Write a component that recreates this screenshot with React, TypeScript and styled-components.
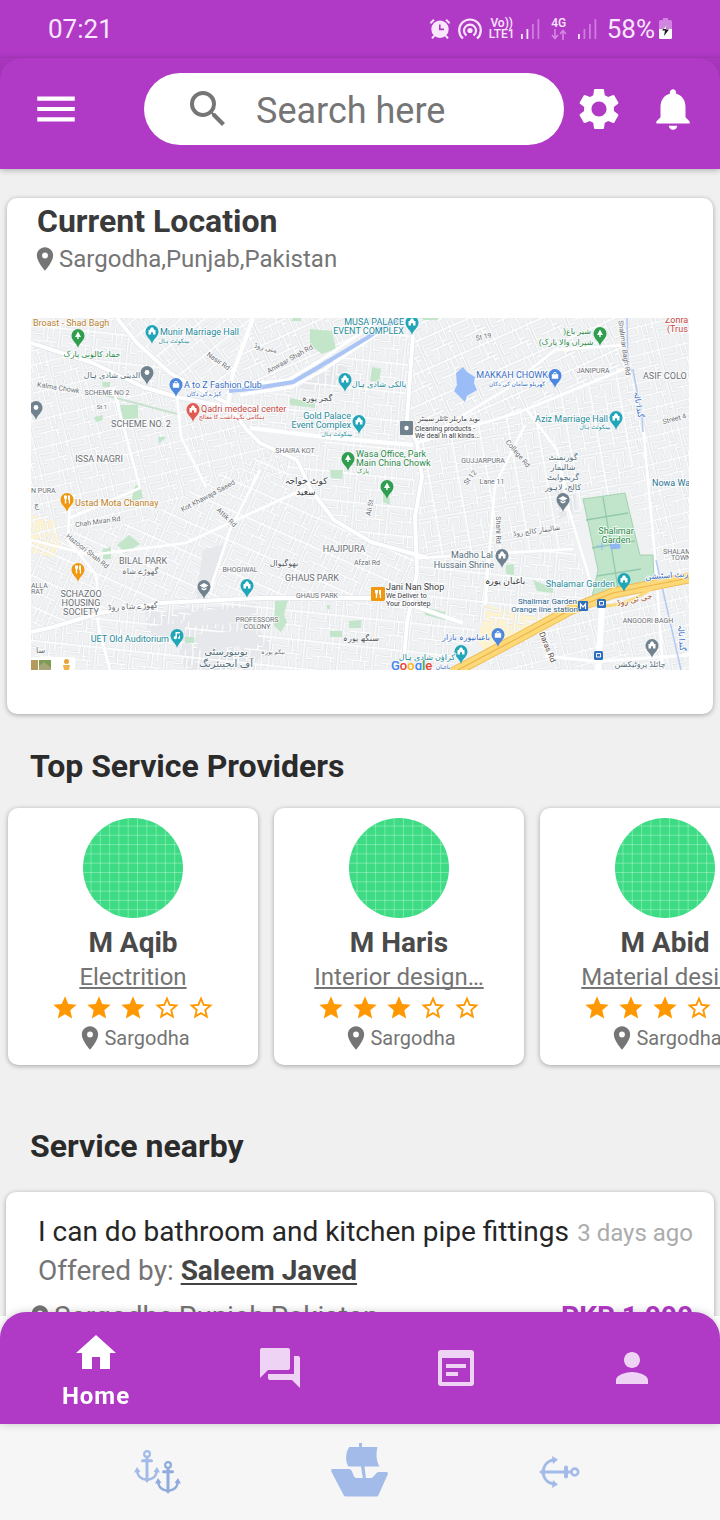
import React from "react";
import styled, { createGlobalStyle } from "styled-components";
import {
  MdForum,
  MdHome,
  MdLocationOn,
  MdMenu,
  MdNotifications,
  MdPerson,
  MdSearch,
  MdSettings,
  MdStar,
  MdStarBorder,
} from "react-icons/md";

const purple = "#b039c6";

const GlobalStyle = createGlobalStyle`
  * { box-sizing: border-box; }
  body { margin: 0; background: #fff; font-family: Roboto, "Noto Sans", sans-serif; }
  button, input { font: inherit; border: 0; background: none; padding: 0; color: inherit; }
  h1, h2, h3, p { margin: 0; }
  svg { display: block; flex: none; }
`;

const Shell = styled.div`
  display: flex;
  flex-direction: column;
  height: 100vh;
  overflow: hidden;
`;

/* ---------- status bar ---------- */

const StatusBar = styled.div`
  display: flex;
  align-items: center;
  flex: none;
  height: 58px;
  padding: 0 48px;
  background: ${purple};
  color: #fae6fd;
  font-size: 26px;
  line-height: 32px;
`;

const StatusIcons = styled.div`
  display: flex;
  align-items: center;
  gap: 6px;
  margin-left: auto;
`;

const Carrier = styled.div`
  display: flex;
  flex-direction: column;
  align-items: center;
  width: 26px;
  font-size: 12px;
  font-weight: 500;
  line-height: 11px;
  white-space: nowrap;
`;

const Battery = styled.div`
  display: flex;
  align-items: center;
  gap: 4px;
  margin-left: 4px;
`;

const Bars = ({ lit }: { lit: number }) => (
  <svg width="19" height="21" viewBox="0 0 19 21" fill="currentColor">
    {[5, 10, 15, 20].map((h, i) => (
      <rect key={h} x={i * 5.5} y={20 - h} width="1.8" height={h} opacity={i < lit ? 1 : 0.4} />
    ))}
  </svg>
);

const AlarmIcon = () => (
  <svg width="22" height="22" viewBox="0 0 22 22" fill="currentColor">
    <path
      fillRule="evenodd"
      d="M11 2.500a8.700 8.700 0 1 1 0 17.400 8.700 8.700 0 0 1 0-17.400zm-1 4v5.700h5v-1.700h-3.400v-4z"
    />
    <path
      d="M1.400 5.200 5 1.600M20.600 5.200 17 1.600M5.600 17.400 3 20.400M16.400 17.400l2.600 3"
      stroke="currentColor"
      strokeWidth="2"
    />
  </svg>
);

const HotspotIcon = () => (
  <svg width="26" height="22" viewBox="0 0 26 22" fill="none" stroke="currentColor" strokeWidth="2.2">
    <circle cx="13" cy="12.500" r="2.600" fill="currentColor" stroke="none" />
    <path d="M9.500 17.500a6 6 0 1 1 7 0M6 20.500a10.800 10.800 0 1 1 14 0" />
  </svg>
);

const DataArrows = () => (
  <svg width="16" height="11" viewBox="0 0 16 11" fill="none" stroke="currentColor" strokeWidth="1.7" opacity="0.45">
    <path d="M4 0v9M1 6l3 3.500 3-3.500M12 11V2M9 5l3-3.500 3 3.500" />
  </svg>
);

const BatteryIcon = () => (
  <svg width="13" height="22" viewBox="0 0 13 22">
    <path d="M4 0h5v2h2.500a1.500 1.500 0 0 1 1.500 1.500V11H0V3.500A1.500 1.500 0 0 1 1.500 2H4z" fill="#d285e0" />
    <path d="M0 11h13v8.500a1.500 1.500 0 0 1-1.500 1.500h-10A1.500 1.500 0 0 1 0 19.500z" fill="#fff" />
    <path d="M8 6.500 3 12.500h3L5 18l5-6.500H7z" fill="#221326" />
    <path d="M8 6.500 4.300 11h5.900L7 11z" fill="#fff" />
  </svg>
);

/* ---------- app bar ---------- */

const AppBarBackdrop = styled.div`
  flex: none;
  position: relative;
  z-index: 1;
  background: linear-gradient(#a936be, #9d33b0 20px, ${purple} 40px);
  box-shadow: 0 1px 6px rgba(0, 0, 0, 0.3);
`;

const AppBar = styled.header`
  display: flex;
  align-items: center;
  padding: 15px 22px 24px 31px;
  border-radius: 22px 22px 0 0;
  background: ${purple};
  color: #fff;
`;

const IconButton = styled.button`
  display: flex;
  align-items: center;
  justify-content: center;
  width: 50px;
  height: 50px;
  cursor: pointer;
`;

const SearchBox = styled.label`
  display: flex;
  align-items: center;
  flex: 1;
  min-width: 0;
  height: 72px;
  margin: 0 10px 0 63px;
  padding: 0 40px;
  gap: 24px;
  border-radius: 36px;
  background: #fff;
  color: #757575;
`;

const SearchInput = styled.input`
  flex: 1;
  min-width: 0;
  height: 48px;
  padding-top: 4px;
  font-size: 36px;
  line-height: 44px;
  outline: none;
  &::placeholder {
    color: #757575;
    opacity: 1;
  }
`;

const Actions = styled.div`
  display: flex;
  gap: 24px;
`;

/* ---------- content ---------- */

const Main = styled.main`
  flex: 1;
  min-height: 0;
  padding-top: 29px;
  overflow: hidden auto;
  background: #f0f0f0;
  scrollbar-width: none;
`;

const Card = styled.section`
  border-radius: 10px;
  background: #fff;
  box-shadow: 0 1px 5px rgba(0, 0, 0, 0.32);
`;

const LocationCard = styled(Card)`
  margin: 0 7px;
  padding: 4px 24px 44px;
`;

const CardTitle = styled.h1`
  padding-left: 6px;
  color: #3a3a3a;
  font-size: 32px;
  line-height: 38px;
`;

const Place = styled.p<{ $size: number; $line: number }>`
  display: flex;
  align-items: center;
  color: #757575;
  font-size: ${(p) => p.$size}px;
  line-height: ${(p) => p.$line}px;
  white-space: nowrap;
`;

const MapFrame = styled.div`
  margin-top: 40px;
  svg {
    width: 100%;
    height: auto;
  }
`;

const SectionTitle = styled.h2<{ $top: number; $bottom: number }>`
  margin: ${(p) => p.$top}px 30px ${(p) => p.$bottom}px;
  color: #2b2b2b;
  font-size: 32px;
  line-height: 40px;
`;

const ProviderRow = styled.div`
  display: flex;
  gap: 16px;
  margin: -6px 0 -12px;
  padding: 6px 8px 12px;
  overflow: auto hidden;
  scrollbar-width: none;
`;

const ProviderCard = styled(Card)`
  display: flex;
  flex: none;
  flex-direction: column;
  align-items: center;
  width: 250px;
  padding: 10px 0 11px;
`;

const Avatar = styled.svg`
  width: 100px;
  height: 100px;
  margin-bottom: 8px;
`;

const ProviderName = styled.h3`
  color: #4a4a4a;
  font-size: 28px;
  line-height: 34px;
`;

const ServiceLink = styled.a`
  color: #757575;
  font-size: 24px;
  line-height: 34px;
  text-decoration: underline;
  text-decoration-skip-ink: none;
  white-space: nowrap;
`;

const Stars = styled.div`
  display: flex;
  gap: 6px;
  color: #ff9800;
`;

const OfferCard = styled(Card)`
  margin: 0 6px 40px;
  padding: 20px 21px 24px 32px;
`;

const OfferLine = styled.div`
  display: flex;
  align-items: center;
  justify-content: space-between;
  color: #757575;
  font-size: 28px;
  line-height: 38px;
  white-space: nowrap;
`;

const OfferTitle = styled.h3`
  color: #262626;
  font-size: 28px;
  font-weight: 400;
`;

const Ago = styled.time`
  padding-top: 2px;
  color: #acacac;
  font-size: 24px;
`;

const OfferedBy = styled.p`
  a {
    color: #444;
    font-weight: 700;
    text-underline-offset: 3px;
    text-decoration-thickness: 2px;
  }
`;

const OfferFoot = styled(OfferLine)`
  margin: 8px 0 0 -12px;
`;

const Price = styled.strong`
  color: ${purple};
`;

/* ---------- bottom bars ---------- */

const TabBar = styled.nav`
  display: grid;
  grid-template-columns: 12fr 11fr 11fr 11fr;
  flex: none;
  position: relative;
  z-index: 1;
  height: 112px;
  margin-top: -4px;
  border-radius: 26px 26px 0 0;
  background: ${purple};
  box-shadow: 0 0 8px rgba(0, 0, 0, 0.2);
`;

const Tab = styled.button`
  display: flex;
  flex-direction: column;
  align-items: center;
  justify-content: center;
  color: #efd3f4;
  font-size: 24px;
  font-weight: 700;
  line-height: 30px;
  letter-spacing: 1px;
  cursor: pointer;
  &[aria-current] {
    padding-top: 4px;
    color: #fff;
  }
  svg + span {
    margin-top: 4px;
  }
`;

const SystemBar = styled.nav`
  display: flex;
  align-items: center;
  justify-content: center;
  flex: none;
  height: 96px;
  padding-right: 2px;
  background: #f6f6f6;
`;

const SystemButton = styled.button`
  display: flex;
  justify-content: center;
  width: 200px;
  cursor: pointer;
`;

const ArticleIcon = () => (
  <svg width="48" height="48" viewBox="0 0 24 24" fill="currentColor">
    <path
      fillRule="evenodd"
      d="M4.500 3h15A1.500 1.500 0 0 1 21 4.500v15a1.500 1.500 0 0 1-1.500 1.500h-15A1.500 1.500 0 0 1 3 19.500v-15A1.500 1.500 0 0 1 4.500 3zM5 7v12h14V7z"
    />
    <path d="M7 10h10v2H7zM7 14h6v2H7z" />
  </svg>
);

/* An anchor 26 wide and 33 high, its ring at the top. */
const AnchorShape = ({ color, transform }: { color: string; transform?: string }) => (
  <g transform={transform} fill="none" stroke={color} strokeWidth="2.6">
    <circle cx="13" cy="4" r="2.900" strokeWidth="2.200" />
    <path d="M13 7v23" strokeWidth="3" />
    <path d="M8.500 10.700h9" strokeWidth="3" strokeLinecap="round" />
    <path d="M3.200 20c0 6 4 9.500 9.800 9.800 5.800-.3 9.800-3.800 9.800-9.800" />
    <path d="m0 22.500 3-5.500 3.500 5zM26 22.500 23 17l-3.500 5zM10 29h6l-3 4z" fill={color} stroke="none" />
  </g>
);

const AnchorsIcon = () => (
  <svg width="50" height="44" viewBox="0 0 50 44">
    <AnchorShape color="#a3bbe8" />
    <AnchorShape color="#90abdc" transform="translate(21 11)" />
  </svg>
);

const ShipIcon = () => (
  <svg width="57" height="58" viewBox="0 0 57 58" fill="#a3bbe8">
    <path d="M28 0h3v4h15.500c-1.500 6-1.500 13 1.800 19.500H33.500L35 36h-3l-2-12.500H17.500c-3-4-3.500-14 .8-19.500H28z" />
    <path d="M1.500 26H18q2 0 2.800 2l2 5q.8 2 2.700 2h14q1.800 0 3-1.500l3-3.500q1-1 2.500-1h7q2.500 0 1.700 2.500L47.500 52q-.7 1.500-2 1.500H15q-1.800 0-2.400-1.500L.3 28.500Q-.3 26 1.500 26z" />
  </svg>
);

const BackAnchorIcon = () => (
  <svg width="41" height="32" viewBox="0 0 41 32">
    <g fill="none" stroke="#a3bbe8" strokeWidth="3">
      <circle cx="35.800" cy="16" r="3.400" strokeWidth="2.600" />
      <path d="M32 16H3" />
      <path d="M27 11.500v9" strokeWidth="4" strokeLinecap="round" />
      <path d="M14.500 4C8.500 4.800 4.500 9.500 4.200 16c.3 6.500 4.300 11.200 10.300 12" />
      <path d="m13 0 6 3.500-5 4.500zM13 32l6-3.500-5-4.500zM4.500 12.500v7L0 16z" fill="#a3bbe8" stroke="none" />
    </g>
  </svg>
);

/* ---------- map ---------- */

const teal = "#1f8b9b";
const slate = "#546e7a";
const grey = "#6b6f74";
const blue = "#3a6fc4";
const green = "#2b8a4b";

type Label = [x: number, y: number, text: string, size: number, color: string, anchor?: "start" | "middle" | "end", turn?: number];

const labels: Label[] = [
  [33, 326, "Broast - Shad Bagh", 9, "#b9822f"],
  [92, 357, "حماد کالونی پارک", 8, green, "middle"],
  [160, 335, "Munir Marriage Hall", 9, teal],
  [174, 343, "بینکوئٹ ہال", 6, teal, "middle"],
  [112, 378, "الدیثی شادی ہال", 8, slate, "middle"],
  [58, 390, "Kalma Chowk", 7, grey, "middle", 9],
  [107, 395, "SCHEME NO 2", 7, grey, "middle"],
  [102, 409, "St 1", 6, grey, "middle"],
  [217, 363, "Nasir Rd", 7, grey, "middle", 35],
  [184, 388, "A to Z Fashion Club", 9, blue],
  [204, 396, "کپڑے کی دکان", 6, blue, "middle"],
  [201, 412, "Qadri medecal center", 9, "#c5483f"],
  [232, 419, "ہنگامی نگہداشت کا معالج", 6, "#c5483f", "middle"],
  [141, 427, "SCHEME NO. 2", 9, grey, "middle"],
  [99, 462, "ISSA NAGRI", 9, grey, "middle"],
  [31, 493, "N PURA", 7, grey],
  [404, 325, "MUSA PALACE", 9, teal, "end"],
  [404, 334, "EVENT COMPLEX", 9, teal, "end"],
  [265, 350, "متی روڈ", 7, grey, "middle", 14],
  [291, 361, "Anwaar Shah Rd", 7, grey, "middle", -29],
  [379, 387, "پالکی شادی ہال", 8, teal, "middle"],
  [317, 401, "گجر پورہ", 8, "#4c5055", "middle"],
  [351, 419, "Gold Palace", 9, teal, "end"],
  [351, 428, "Event Complex", 9, teal, "end"],
  [337, 436, "بینکوئٹ ہال", 6, teal, "middle"],
  [295, 453, "SHAIRA KOT", 7, grey, "middle"],
  [306, 484, "کوٹ خواجہ", 9, "#3c4043", "middle"],
  [306, 495, "سعید", 9, "#3c4043", "middle"],
  [356, 457, "Wasa Office, Park", 9, green],
  [356, 466, "Main China Chowk", 9, green],
  [363, 473, "پارک", 6, green, "middle"],
  [449, 421, "نوید ماربلز ٹائلز سینٹر", 7, "#3c4043", "middle"],
  [415, 431, "Cleaning products -", 7, "#3c4043"],
  [415, 438, "We deal in all kinds...", 7, "#3c4043"],
  [484, 339, "St 19", 7, grey, "middle", -12],
  [577, 334, "شیر باغ(", 8, green, "middle"],
  [566, 345, "شیراں والا پارک)", 8, green, "middle"],
  [548, 378, "MAKKAH CHOWK", 9, blue, "end"],
  [517, 386, "گھریلو سامان کی دکان", 6, blue, "middle"],
  [593, 373, "JANIPURA", 7, grey, "middle"],
  [643, 379, "ASIF COLO", 9, grey],
  [665, 323, "Zohra", 9, "#c5483f"],
  [667, 332, "(Trus", 9, "#c5483f"],
  [622, 348, "Shalimar Bagh Rd", 7, grey, "middle", 82],
  [636, 405, "گندا نالہ", 8, blue, "middle", 80],
  [675, 421, "Street 4", 7, grey, "middle", -15],
  [608, 422, "Aziz Marriage Hall", 9, teal, "end"],
  [595, 429, "بینکوئٹ ہال", 6, teal, "middle"],
  [483, 463, "GUJJARPURA", 7, grey, "middle"],
  [516, 455, "College Rd", 7, grey, "middle", 50],
  [472, 479, "St 12", 7, grey, "middle", -52],
  [492, 484, "Lane 11", 7, grey, "middle"],
  [563, 460, "گورنمنٹ", 8, slate, "middle"],
  [563, 470, "شالیمار", 8, slate, "middle"],
  [563, 480, "گریجوایٹ", 8, slate, "middle"],
  [563, 490, "کالج، لاہور", 8, slate, "middle"],
  [652, 486, "Nowa Wa", 9, "#2c7598"],
  [75, 506, "Ustad Mota Channay", 9, "#c07f22"],
  [98, 524, "Chah Miran Rd", 7, grey, "middle", -8],
  [86, 553, "Hazoori Shah Rd", 7, grey, "middle", 38],
  [209, 498, "Kot Khawaja Saeed", 7, grey, "middle", -28],
  [225, 519, "Attik Rd", 7, grey, "middle", 44],
  [143, 564, "BILAL PARK", 9, grey, "middle"],
  [140, 574, "گھوڑے شاہ", 8, grey, "middle"],
  [31, 588, "ALLA", 7, grey],
  [31, 594, "RAT", 7, grey],
  [81, 597, "SCHAZOO", 9, grey, "middle"],
  [81, 606, "HOUSING", 9, grey, "middle"],
  [81, 615, "SOCIETY", 9, grey, "middle"],
  [133, 609, "گھوڑے شاہ روڈ", 8, grey, "middle", -3],
  [240, 572, "BHOGIWAL", 7, grey, "middle"],
  [169, 642, "UET Old Auditorium", 9, teal, "end"],
  [257, 622, "PROFESSORS", 7, grey, "middle"],
  [257, 629, "COLONY", 7, grey, "middle"],
  [226, 655, "یونیورسٹی", 10, slate, "middle"],
  [226, 667, "آف انجینئرنگ", 10, slate, "middle"],
  [273, 654, "بیگم پورہ", 6, grey, "middle"],
  [344, 552, "HAJIPURA", 9, grey, "middle"],
  [284, 566, "بھوگیوال", 8, "#55595e", "middle"],
  [367, 565, "Afzal Rd", 7, grey, "middle"],
  [312, 581, "GHAUS PARK", 9, grey, "middle"],
  [317, 598, "GHAUS PARK", 7, grey, "middle"],
  [372, 508, "Ali St", 7, grey, "middle", -80],
  [386, 590, "Jani Nan Shop", 9, "#3c4043"],
  [386, 598, "We Deliver to", 7, "#3c4043"],
  [386, 606, "Your Doorstep", 7, "#3c4043"],
  [361, 641, "سنگھ پورہ", 8, "#55595e", "middle"],
  [493, 558, "Madho Lal", 9, slate, "end"],
  [494, 568, "Hussain Shrine", 9, slate, "end"],
  [505, 584, "باغبان پورہ", 9, "#3c4043", "middle"],
  [496, 530, "Shahi Rd", 7, grey, "middle", 90],
  [537, 533, "شالیمار کالج روڈ", 7, grey, "middle", -8],
  [616, 534, "Shalimar", 9, green, "middle"],
  [616, 543, "Garden", 9, green, "middle"],
  [615, 587, "Shalamar Garden", 9, teal, "end"],
  [577, 604, "Shalimar Garden", 8, "#2a6390", "end"],
  [578, 612, "Orange line station", 8, "#2a6390", "end"],
  [635, 602, "جی ٹی روڈ", 8, "#a45b37", "middle", -12],
  [667, 578, "رنٹ اسٹیشن", 8, blue, "middle", -4],
  [663, 554, "SHALAM", 7, grey],
  [671, 560, "TOWN", 7, grey],
  [648, 623, "ANGOORI BAGH", 7, grey, "middle"],
  [466, 640, "باغبانپورہ بازار", 8, blue, "middle"],
  [427, 660, "کراؤن شادی ہال", 8, teal, "middle"],
  [545, 648, "Daras Rd", 8, "#5c5048", "middle", 68],
  [679, 638, "گندا نالہ", 8, blue, "middle", 85],
  [640, 667, "چائلڈ پروٹیکشن", 8, slate, "middle"],
  [443, 669, "باغبان", 6, blue, "middle"],
  [34, 508, "چ", 8, grey],
  [36, 653, "سا", 8, grey],
];

type PinGlyph = "home" | "tree" | "bag" | "fork" | "cap" | "dot" | "note";
type Pin = [x: number, y: number, color: string, glyph: PinGlyph];

const pins: Pin[] = [
  [78, 348, "#2f9e4f", "tree"],
  [152, 344, "#21a6b8", "home"],
  [147, 385, "#70828e", "dot"],
  [36, 420, "#70828e", "dot"],
  [176, 397, "#4c87e0", "bag"],
  [193, 422, "#e25a4f", "home"],
  [412, 335, "#21a6b8", "home"],
  [345, 392, "#21a6b8", "home"],
  [359, 434, "#21a6b8", "home"],
  [348, 471, "#2f9e4f", "tree"],
  [387, 499, "#2f9e4f", "tree"],
  [600, 346, "#2f9e4f", "tree"],
  [555, 388, "#4c87e0", "bag"],
  [616, 430, "#21a6b8", "home"],
  [563, 512, "#70828e", "cap"],
  [67, 512, "#f0980f", "fork"],
  [78, 582, "#f0980f", "fork"],
  [204, 599, "#70828e", "cap"],
  [247, 598, "#21a6b8", "home"],
  [177, 648, "#21a6b8", "note"],
  [502, 568, "#70828e", "home"],
  [624, 592, "#21a6b8", "home"],
  [498, 647, "#4c87e0", "bag"],
  [461, 664, "#21a6b8", "home"],
  [652, 658, "#70828e", "home"],
];

const glyphs: Record<PinGlyph, React.ReactNode> = {
  home: <path d="M-3.500 3v-4.500H-2V-3h1v-1h2v1h1v1.500h1.500V3H1V.8h-2V3z" />,
  tree: <path d="M0-4 3 1.500H.7V3.500H-.7v-2H-3z" />,
  bag: <path fillRule="evenodd" d="M-3.200-1.200h1.400a1.800 2.200 0 0 1 3.600 0h1.400v4.500h-6.400zm2.200 0h2a1 1.200 0 0 0-2 0z" />,
  fork: <path d="M-3-4h3v3.300h-.8V4h-1.400V-.7H-3zM1-4h2v8H1.800V.5H1z" />,
  cap: <path d="M0-3.500 4.500-1 0 1.500-4.500-1zM-2.500 1 0 2.500 2.500 1v1.800L0 4-2.500 2.800z" />,
  dot: <circle r="2.400" />,
  note: <path d="M-1.500-3.500h4.500V-2h-3v4a1.700 1.700 0 1 1-1.500-1.600zM2 0h1v2.500a1 1 0 1 1-1-1z" />,
};

/* Blocks of side streets: outline and the direction that they run in. */
const blocks: [string, string][] = [
  ["M31 318h86l53 55 57 33-50-9-84-34-62-20z", "a"],
  ["M31 343l62 20 84 34 17 26 12 60-60 40-115 20z", "b"],
  ["M117 318h136l-20 55-6 30-57-30z", "c"],
  ["M253 318h130l-60 45-30 18-65 10 6-18z", "d"],
  ["M383 318h30l-6 127-74-7-83-10-22-22 5-14 60-8 30-16z", "a"],
  ["M413 318h212l3 52-100 40-110 33-8-30z", "d"],
  ["M625 318h64v260l-36-20-24-66z", "b"],
  ["M417 443l110-33 101-40 15 57-18 66-42 6-10 50-156 10z", "e"],
  ["M194 423l33-17 23 22 33 32 14 23-21 0-70 0z", "b"],
  ["M283 460l50-22 80 7 4 110-60-15-37-24z", "a"],
  ["M31 540l115-20 60-40 70-30 24 40 23 30 94 38-1 40H250l-90 5-107 25-22 4z", "f"],
  ["M31 632l70-18 59-11 100-5 117 0 40 9 50 16 14 12-33 35H31z", "a"],
  ["M417 558l156-9 22 48-80 35-55-12-43-14z", "a"],
  ["M470 670l60-38 60-26 99-28v92z", "b"],
];

const parks = [
  "M120 405h18v13l-15 2z", "M94 417l9-2-1 6-6 1z", "M102 382h8v5h-7z", "M158 437h8l-7 7z", "M135 486l5-2 3 14-12 4z",
  "M310 329l22 2 4 18-14 5-12-9z", "M372 367l9 2-2 13-9-1z", "M290 398l25 5v5l-25-3z", "M330 470h13l-1 9-11-1z",
  "M293 318h8v3h-10z", "M383 491l6-4 1 18-7-3z", "M129 535l11 9-14 9-9-8z", "M103 549l8-2v12h-8z",
  "M275 601l13-1-4 15 3 7-6 10-7-6z", "M349 621l12-1v8h-12z", "M330 631h12v6h-12z", "M327 605h3v4h-3z",
  "M424 607l21 5v8l-20-5z", "M185 637h9v6h-9z", "M506 565l8-1v11l-8-1z", "M533 580l20 8v5l-16-2z", "M421 318h17v2h-14z",
];

const lanes =
  "M0 9h46M0 28h30M0 19h12M18 9v19M34 0v38M8 28v10M12 9v10M25 9v12M46 18H38M38 18v14M38 32h8M24 28v10M5 0v5M15 0v9M25 0v9M40 0v9M30 33h-6M29 14h5M18 23h7";

const LocationMap = () => (
  <svg viewBox="31 318 658 352" role="img" aria-label="Map of the current location">
    <defs>
      <pattern id="mesh" width="46" height="38" patternUnits="userSpaceOnUse">
        <path d={lanes} fill="none" stroke="#d3d7dc" strokeWidth="3.200" />
        <path d={lanes} fill="none" stroke="#fff" strokeWidth="2.100" />
      </pattern>
      <pattern id="mesh-a" href="#mesh" patternTransform="rotate(6) scale(.75)" />
      <pattern id="mesh-b" href="#mesh" patternTransform="rotate(-14) scale(.72)" />
      <pattern id="mesh-c" href="#mesh" patternTransform="rotate(-38) scale(.75)" />
      <pattern id="mesh-d" href="#mesh" patternTransform="rotate(-24) scale(.78)" />
      <pattern id="mesh-e" href="#mesh" patternTransform="rotate(80) scale(.76)" />
      <pattern id="mesh-f" href="#mesh" patternTransform="rotate(24) scale(.74)" />
    </defs>
    <rect x="31" y="318" width="658" height="352" fill="#eff1f3" />
    <path d="M31 515l24 5 5 25-6 12-23-4zM485 605l50 12 28-8 0 12-70 35-15-12z" fill="#fdf3d0" />
    <path d="M203 550l22-6-18 50-11 6zM145 612l110-8 5 28 15 15-30 23H185l-10-35-28-6zM325 358l22 10-2 18-48 4zM557 490l18-3 2 24-18 8z" fill="#e6e8ec" />
    {blocks.map(([d, mesh]) => (
      <path key={d} d={d} fill={`url(#mesh-${mesh})`} />
    ))}
    <path d="M203 550l22-6-18 50-11 6zM150 626l34-3 2 12-34 3zM190 612l60-5 3 14-60 5zM196 634l58-4 10 14-64 6z" fill="#e6e8ec" />
    {parks.map((d) => (
      <path key={d} d={d} fill="#c3e6cb" />
    ))}
    <path d="M101 394l76 20" stroke="#c9e2d0" strokeWidth="2" />
    <g fill="none" stroke="#dde0e4" strokeWidth="5" strokeLinejoin="round">
      <path d="M31 343l62 20 50 24 34 10 50 10M117 318l20 25 33 30 27 15 30 15 20 27 13 13 37 17 14 30 23 30 37 22 57 16" />
      <path d="M413 335l-3 42-3 43 10 23 5 34-7 40 2 56-10 50-4 47M31 632l22-5 47-14 60-10 100-5h117l40 9 46 16" />
    </g>
    <g fill="none" stroke="#fff" strokeLinejoin="round">
      <path d="M31 343l62 20 50 24 34 10 50 10M117 318l20 25 33 30 27 15 30 15 20 27 13 13 37 17 14 30 23 30 37 22 57 16" strokeWidth="4" />
      <path d="M253 318l-20 55-6 37M250 428l83 10 80 7M413 335l-3 42-3 43 10 23 5 34-7 40 2 56-10 50-4 47M31 632l22-5 47-14 60-10 100-5h117l40 9 46 16" strokeWidth="4" />
      <path d="M228 386l60-6 30-18 62-42M240 395l52-8 30-16 70-47" strokeWidth="3" />
      <path d="M97 617l3 16 10 37M70 500l-2 40 28 35 4 38M177 397l4 40 25 50M113 388l27 100-70 30M210 590l20-60 30-60M417 443l100-30 110-45M643 427l12 130 8 113M31 540l60 15 95-12 120-55M527 410l30 40 12 60 24 80M573 549l-155 9M625 345l-70 5-50 40-88 53M485 605l10-120 30-60" strokeWidth="2.500" />
      <path d="M603 593l-5 77" strokeWidth="6" />
      <path d="M538 628l15 30M603 661l86-6M545 656l58 6" strokeWidth="3" />
    </g>
    <path d="M229 391l21-2 43-7 24-14 50-30 16-11 20-9" fill="none" stroke="#a9c4f5" strokeWidth="4" />
    <path d="M627 318l1 52 5 0 9 47 1 15M656 560l25 110" fill="none" stroke="#b3caf3" strokeWidth="1.500" />
    <path d="M463 367l4 5 8 5-1 6 3 7-10 6-2 6-11-11 3-6-1-12z" fill="#9abdf8" />
    <path d="M583 499l42-6 15 62h13l1 25-37 17h-25l6-27z" fill="#c0e5ca" stroke="#8fc79e" strokeWidth=".7" />
    <path d="M586 520l42-7M603 497l16 97M592 548l43-7M597 576l44-7" fill="none" stroke="#93c9ae" strokeWidth="1.300" />
    <path d="M610 543l9-2 1 7-9 1zM596 546h8M602 541v9" fill="#8fb8f3" stroke="#8fb8f3" />
    <g fill="none">
      <path d="M452 673l68-36 50-27 43-17 76-15" stroke="#f2bb55" strokeWidth="11" />
      <path d="M452 673l68-36 50-27 43-17 76-15" stroke="#fcd978" strokeWidth="9" />
      <path d="M452 673l68-36 50-27 43-17 76-15" stroke="#efb44a" strokeWidth="1.200" />
      <path d="M590 604q30 8 65-18" stroke="#fcd978" strokeWidth="3" />
    </g>
    <g fill="#2f6fc0">
      <rect x="578" y="601" width="10" height="10" rx="1" />
      <rect x="597" y="599" width="9" height="9" rx="1.500" />
      <rect x="594" y="651" width="9" height="9" rx="1.500" />
    </g>
    <path d="M580.500 609v-5l2.500 3 2.500-3v5" fill="none" stroke="#fff" strokeWidth="1.200" />
    <path d="M599.500 601.500h4v3.500h-4zM596.500 653.500h4v3.500h-4z" fill="none" stroke="#fff" />
    <rect x="400" y="421" width="13" height="14" rx="1" fill="#70828e" />
    <circle cx="406.500" cy="428" r="2.200" fill="#fff" />
    <rect x="371" y="587" width="14" height="14" rx="1" fill="#f0980f" />
    <g transform="translate(378 594)" fill="#fff">{glyphs.fork}</g>
    {pins.map(([x, y, color, glyph]) => (
      <g key={`${x}-${y}`} transform={`translate(${x} ${y})`}>
        <path d="M0 0C-1-5-6.500-7-6.500-12.500a6.500 6.500 0 0 1 13 0C6.500-7 1-5 0 0z" fill={color} />
        <g transform="translate(0 -12.500)" fill="#fff">{glyphs[glyph]}</g>
      </g>
    ))}
    <g fontFamily='Roboto, "DejaVu Sans", sans-serif' stroke="#fff" strokeWidth="1.800" strokeOpacity=".8" paintOrder="stroke">
      {labels.map(([x, y, text, size, color, anchor = "start", turn = 0]) => (
        <text
          key={`${x}-${y}`}
          x={x}
          y={y}
          fontSize={size}
          fill={color}
          textAnchor={anchor}
          direction={anchor === "middle" && text > "\u0600" ? "rtl" : "ltr"}
          transform={turn ? `rotate(${turn} ${x} ${y})` : undefined}
        >
          {text}
        </text>
      ))}
    </g>
    <text x="391" y="670" fontSize="13" fontWeight="500">
      <tspan fill="#4285f4">G</tspan>
      <tspan fill="#ea4335">o</tspan>
      <tspan fill="#fbbc05">o</tspan>
      <tspan fill="#4285f4">g</tspan>
      <tspan fill="#34a853">l</tspan>
      <tspan fill="#ea4335">e</tspan>
    </text>
    <rect x="31" y="657" width="44" height="13" rx="2" fill="#fff" />
    <rect x="31" y="660" width="7" height="10" fill="#b49a5c" />
    <rect x="39" y="660" width="12" height="10" fill="#7d9b54" />
    <path d="M39 666l5-4 7 6v2H39z" fill="#a7a678" />
    <circle cx="66.500" cy="661.500" r="2.500" fill="#e8a33a" />
    <path d="M63 665h7l-1 5h-5z" fill="#f0b14e" />
  </svg>
);

/* ---------- providers ---------- */

const gridLines = Array.from({ length: 11 }, (_, i) => 8 + i * 9.3);

const GridAvatar = ({ id }: { id: string }) => (
  <Avatar viewBox="0 0 100 100" aria-hidden="true">
    <clipPath id={id}>
      <circle cx="50" cy="50" r="50" />
    </clipPath>
    <g clipPath={`url(#${id})`}>
      <rect width="100" height="100" fill="#3ddc84" />
      <path d={gridLines.map((n) => `M${n} 0V100M0 ${n}H100`).join("")} stroke="#fff" strokeOpacity=".3" strokeWidth="1" />
    </g>
  </Avatar>
);

const providers = [
  { name: "M Aqib", service: "Electrition", rating: 3 },
  { name: "M Haris", service: "Interior design…", rating: 3 },
  { name: "M Abid", service: "Material desig…", rating: 3 },
];

export default function App() {
  return (
    <Shell>
      <GlobalStyle />
      <StatusBar>
        <span>07:21</span>
        <StatusIcons>
          <AlarmIcon />
          <HotspotIcon />
          <Carrier>
            <span>Vo))</span>
            <span>LTE1</span>
          </Carrier>
          <Bars lit={2} />
          <Carrier>
            <span>4G</span>
            <DataArrows />
          </Carrier>
          <Bars lit={1} />
          <Battery>
            <span>58%</span>
            <BatteryIcon />
          </Battery>
        </StatusIcons>
      </StatusBar>

      <AppBarBackdrop>
        <AppBar>
          <IconButton aria-label="Menu">
            <MdMenu size={50} />
          </IconButton>
          <SearchBox>
            <MdSearch size={48} />
            <SearchInput type="text" placeholder="Search here" aria-label="Search here" />
          </SearchBox>
          <Actions>
            <IconButton aria-label="Settings">
              <MdSettings size={50} />
            </IconButton>
            <IconButton aria-label="Notifications">
              <MdNotifications size={50} />
            </IconButton>
          </Actions>
        </AppBar>
      </AppBarBackdrop>

      <Main>
        <LocationCard>
          <CardTitle>Current Location</CardTitle>
          <Place $size={24} $line={38}>
            <MdLocationOn size={28} />
            Sargodha,Punjab,Pakistan
          </Place>
          <MapFrame>
            <LocationMap />
          </MapFrame>
        </LocationCard>

        <SectionTitle $top={32} $bottom={22}>Top Service Providers</SectionTitle>
        <ProviderRow>
          {providers.map(({ name, service, rating }, index) => (
            <ProviderCard key={name}>
              <GridAvatar id={`avatar-${index}`} />
              <ProviderName>{name}</ProviderName>
              <ServiceLink href="#">{service}</ServiceLink>
              <Stars role="img" aria-label={`${rating} of 5 stars`}>
                {[0, 1, 2, 3, 4].map((i) =>
                  i < rating ? <MdStar key={i} size={28} /> : <MdStarBorder key={i} size={28} />
                )}
              </Stars>
              <Place $size={20} $line={32}>
                <MdLocationOn size={28} />
                Sargodha
              </Place>
            </ProviderCard>
          ))}
        </ProviderRow>

        <SectionTitle $top={61} $bottom={26}>Service nearby</SectionTitle>
        <OfferCard>
          <OfferLine>
            <OfferTitle>I can do bathroom and kitchen pipe fittings</OfferTitle>
            <Ago>3 days ago</Ago>
          </OfferLine>
          <OfferLine>
            <OfferedBy>
              Offered by: <a href="#">Saleem Javed</a>
            </OfferedBy>
          </OfferLine>
          <OfferFoot>
            <Place $size={28} $line={38}>
              <MdLocationOn size={28} />
              Sargodha,Punjab,Pakistan
            </Place>
            <Price>PKR 1,000</Price>
          </OfferFoot>
        </OfferCard>
      </Main>

      <TabBar>
        <Tab aria-current="page">
          <MdHome size={48} />
          <span>Home</span>
        </Tab>
        <Tab aria-label="Messages">
          <MdForum size={48} />
        </Tab>
        <Tab aria-label="Orders">
          <ArticleIcon />
        </Tab>
        <Tab aria-label="Profile">
          <MdPerson size={48} />
        </Tab>
      </TabBar>
      <SystemBar>
        <SystemButton aria-label="Recent apps">
          <AnchorsIcon />
        </SystemButton>
        <SystemButton aria-label="Home screen">
          <ShipIcon />
        </SystemButton>
        <SystemButton aria-label="Back">
          <BackAnchorIcon />
        </SystemButton>
      </SystemBar>
    </Shell>
  );
}
